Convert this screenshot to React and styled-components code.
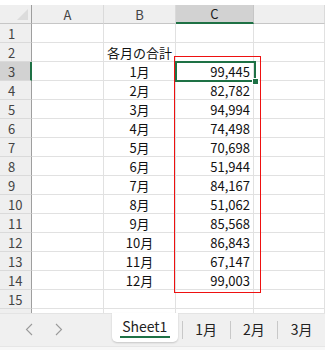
import React from "react";
import styled, { createGlobalStyle } from "styled-components";

const GlobalStyle = createGlobalStyle`
  body {
    margin: 0;
    padding: 0;
    background: #ffffff;
    font-family: "Noto Sans CJK JP", "Noto Sans", sans-serif;
    overflow: hidden;
  }
`;

const GREEN = "#1e7145";
const LINE = "#e1e1e1";

const Sheet = styled.div`
  width: 325px;
  height: 350px;
  display: flex;
  flex-direction: column;
  background: #ffffff;
  position: relative;
`;

const TopGap = styled.div`
  height: 5px;
  flex-shrink: 0;
`;

const Grid = styled.div`
  display: grid;
  grid-template-columns: 32px 72px 72px 78px 1fr;
  grid-auto-rows: 19px;
  flex-shrink: 0;
`;

const Corner = styled.div`
  background: #efefef;
  border-right: 1px solid #9e9e9e;
  border-bottom: 1px solid #c6c6c6;
  position: relative;
  &::after {
    content: "";
    position: absolute;
    right: 3px;
    bottom: 3px;
    border-style: solid;
    border-width: 0 0 11px 11px;
    border-color: transparent transparent #dcdcdc transparent;
  }
`;

const ColHead = styled.div`
  background: ${(p) => (p.$active ? "#d2d2d2" : "#efefef")};
  border-right: 1px solid ${(p) => (p.$active ? "#c6c6c6" : "#dadada")};
  border-bottom: ${(p) => (p.$active ? `2px solid ${GREEN}` : "1px solid #c6c6c6")};
  color: ${(p) => (p.$active ? "#1a1a1a" : "#444")};
  font-size: 13px;
  display: flex;
  align-items: center;
  justify-content: center;
  line-height: 1;
`;

const RowHead = styled.div`
  background: ${(p) => (p.$active ? "#d2d2d2" : "#efefef")};
  border-right: ${(p) => (p.$active ? `2px solid ${GREEN}` : "1px solid #9e9e9e")};
  border-bottom: 1px solid #dadada;
  color: #444;
  font-size: 13px;
  display: flex;
  align-items: center;
  padding-left: 8px;
  line-height: 1;
`;

const Cell = styled.div`
  border-right: 1px solid ${LINE};
  border-bottom: 1px solid ${LINE};
  font-size: 13px;
  color: #111;
  display: flex;
  align-items: center;
  justify-content: ${(p) => p.$align || "flex-start"};
  padding-right: ${(p) => (p.$align === "flex-end" ? "3px" : "0")};
  line-height: 1;
  white-space: nowrap;
`;

const ActiveCell = styled.div`
  position: absolute;
  left: 175px;
  top: 61px;
  width: 77px;
  height: 17px;
  border: 2px solid ${GREEN};
  pointer-events: none;
  &::after {
    content: "";
    position: absolute;
    right: -5px;
    bottom: -5px;
    width: 5px;
    height: 5px;
    background: ${GREEN};
    border: 1px solid #fff;
  }
`;

const Highlight = styled.div`
  position: absolute;
  left: 174px;
  top: 56px;
  width: 85px;
  height: 235px;
  border: 1.5px solid #ee1111;
  pointer-events: none;
`;

const PartialRow = styled.div`
  height: 4px;
  display: grid;
  grid-template-columns: 32px 72px 72px 78px 1fr;
  flex-shrink: 0;
`;

const PartialCell = styled.div`
  border-right: 1px solid ${(p) => (p.$head ? "#9e9e9e" : LINE)};
  background: ${(p) => (p.$head ? "#efefef" : "#fff")};
`;

const TabBar = styled.div`
  height: 32px;
  background: #f0f0f0;
  display: flex;
  align-items: flex-start;
  flex-shrink: 0;
  border-top: 1px solid #e4e4e4;
`;

const Nav = styled.div`
  width: 114px;
  height: 30px;
  display: flex;
  align-items: center;
  padding-left: 25px;
  gap: 22px;
  box-sizing: border-box;
`;

const Tab = styled.div`
  height: 28px;
  display: flex;
  align-items: center;
  justify-content: center;
  font-size: 14px;
  color: #222;
  box-sizing: border-box;
  position: relative;
  ${(p) =>
    p.$active
      ? `
    width: 68px;
    background: #fff;
    border-radius: 0 0 5px 5px;
    box-shadow: 0 1px 2px rgba(0,0,0,0.18);
    margin-top: -1px;
    height: 29px;
    padding-bottom: 4px;
  `
      : `
    width: 48px;
    margin-top: 1px;
  `}
`;

const Underline = styled.div`
  position: absolute;
  left: 8px;
  right: 8px;
  bottom: 4px;
  height: 2px;
  background: ${GREEN};
`;

const Sep = styled.div`
  width: 1px;
  height: 18px;
  background: #c8c8c8;
  margin-top: 7px;
  margin-left: ${(p) => (p.$first ? "4px" : "0")};
`;

const Status = styled.div`
  flex: 1;
  background: #f7f7f7;
  border-top: 1px solid #e6e6e6;
`;

const Chevron = ({ dir }) => (
  <svg width="8" height="13" viewBox="0 0 8 13">
    <path
      d={dir === "left" ? "M7 1 L1.5 6.5 L7 12" : "M1 1 L6.5 6.5 L1 12"}
      fill="none"
      stroke="#9a9a9a"
      strokeWidth="1.1"
    />
  </svg>
);

const data = [
  ["", ""],
  ["各月の合計", ""],
  ["1月", "99,445"],
  ["2月", "82,782"],
  ["3月", "94,994"],
  ["4月", "74,498"],
  ["5月", "70,698"],
  ["6月", "51,944"],
  ["7月", "84,167"],
  ["8月", "51,062"],
  ["9月", "85,568"],
  ["10月", "86,843"],
  ["11月", "67,147"],
  ["12月", "99,003"],
  ["", ""],
];

const App = () => {
  return (
    <>
      <GlobalStyle />
      <Sheet>
        <TopGap />
        <Grid>
          <Corner />
          <ColHead>A</ColHead>
          <ColHead>B</ColHead>
          <ColHead $active>C</ColHead>
          <ColHead />
          {data.map(([b, c], i) => (
            <React.Fragment key={i}>
              <RowHead $active={i === 2}>{i + 1}</RowHead>
              <Cell />
              <Cell $align="center">{b}</Cell>
              <Cell $align="flex-end">{c}</Cell>
              <Cell />
            </React.Fragment>
          ))}
        </Grid>
        <PartialRow>
          <PartialCell $head />
          <PartialCell />
          <PartialCell />
          <PartialCell />
          <PartialCell />
        </PartialRow>
        <TabBar>
          <Nav>
            <Chevron dir="left" />
            <Chevron dir="right" />
          </Nav>
          <Tab $active>
            Sheet1
            <Underline />
          </Tab>
          <Sep $first />
          <Tab>1月</Tab>
          <Sep />
          <Tab>2月</Tab>
          <Sep />
          <Tab>3月</Tab>
        </TabBar>
        <Status />
        <ActiveCell />
        <Highlight />
      </Sheet>
    </>
  );
};

export default App;
